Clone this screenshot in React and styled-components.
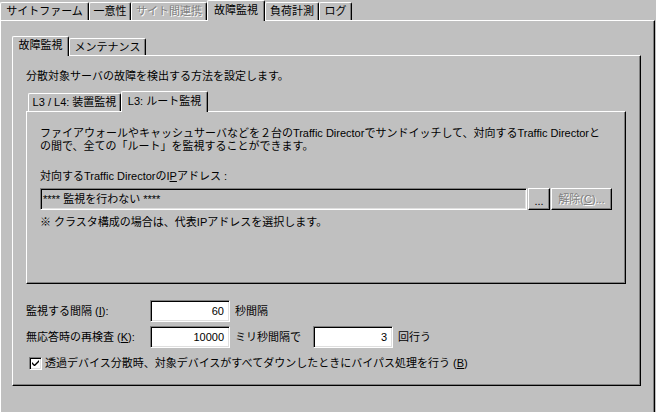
import React from 'react';
import styled, { createGlobalStyle } from 'styled-components';

const Global = createGlobalStyle`
  html, body { margin: 0; padding: 0; background: #c0c0c0; }
  body {
    font-family: "Liberation Sans", "Noto Sans CJK JP", sans-serif;
    font-size: 11px;
    color: #000;
  }
  #root { width: 656px; height: 412px; overflow: hidden; }
`;

const Screen = styled.div`
  width: 656px;
  height: 412px;
  overflow: hidden;
  background: #c0c0c0;
`;

const TabRow = styled.div`
  display: flex;
  align-items: flex-end;
  height: ${p => p.$h}px;
  padding-left: ${p => p.$pad}px;
  position: relative;
  z-index: 2;
`;

const Tab = styled.div`
  box-sizing: border-box;
  width: ${p => p.$w}px;
  height: ${p => (p.$active ? p.$h + 1 : p.$h - 2)}px;
  margin-bottom: ${p => (p.$active ? -1 : 0)}px;
  padding-bottom: ${p => (p.$active ? 2 : 0)}px;
  background: #c0c0c0;
  border-top: 1px solid #fff;
  border-left: 1px solid #fff;
  border-right: 1px solid #000;
  border-radius: 2px 2px 0 0;
  box-shadow: inset -1px 0 #808080;
  display: flex;
  align-items: center;
  justify-content: center;
  white-space: nowrap;
  line-height: 13px;
  position: relative;
  z-index: ${p => (p.$active ? 3 : 1)};
  color: ${p => (p.$disabled ? '#808080' : '#000')};
  text-shadow: ${p => (p.$disabled ? '1px 1px 0 #fff' : 'none')};
`;

const Panel = styled.div`
  box-sizing: border-box;
  width: ${p => p.$w}px;
  height: ${p => p.$h}px;
  background: #c0c0c0;
  border-top: 1px solid #fff;
  border-left: 1px solid #fff;
  border-right: 1px solid #000;
  border-bottom: ${p => (p.$open ? 'none' : '1px solid #000')};
  box-shadow: ${p => (p.$open ? 'inset -1px 0 #808080' : 'inset -1px -1px #808080')};
  padding: ${p => p.$pad};
  display: flex;
  flex-direction: column;
  flex-shrink: 0;
`;

const Section = styled.div`
  display: flex;
  flex-direction: column;
  margin-top: ${p => p.$mt || 0}px;
`;

const Text = styled.div`
  line-height: 13px;
  white-space: nowrap;
  margin-top: ${p => p.$mt || 0}px;
`;

const Row = styled.div`
  display: flex;
  align-items: center;
  margin-top: ${p => p.$mt || 0}px;
  margin-left: ${p => p.$ml || 0}px;
`;

const Field = styled.div`
  box-sizing: border-box;
  width: ${p => p.$w}px;
  height: 22px;
  background: ${p => (p.$disabled ? '#c0c0c0' : '#fff')};
  border-top: 1px solid #808080;
  border-left: 1px solid #808080;
  border-right: 1px solid #fff;
  border-bottom: 1px solid #fff;
  box-shadow: inset 1px 1px #000, inset -1px -1px #dfdfdf;
  display: flex;
  align-items: center;
  justify-content: ${p => (p.$right ? 'flex-end' : 'flex-start')};
  padding: ${p => (p.$right ? '0 5px 0 0' : '0 0 0 2px')};
  white-space: nowrap;
  line-height: 13px;
  flex-shrink: 0;
`;

const Button = styled.div`
  box-sizing: border-box;
  width: ${p => p.$w}px;
  height: 22px;
  margin-left: ${p => p.$ml || 0}px;
  padding-top: ${p => (p.$low ? 4 : 0)}px;
  background: #c0c0c0;
  border-top: 1px solid #fff;
  border-left: 1px solid #fff;
  border-right: 1px solid #000;
  border-bottom: 1px solid #000;
  box-shadow: inset -1px -1px #808080;
  display: flex;
  align-items: center;
  justify-content: center;
  white-space: nowrap;
  line-height: 13px;
  color: ${p => (p.$disabled ? '#808080' : '#000')};
  text-shadow: ${p => (p.$disabled ? '1px 1px 0 #fff' : 'none')};
  flex-shrink: 0;
`;

const Label = styled.div`
  width: ${p => (p.$w ? `${p.$w}px` : 'auto')};
  margin-left: ${p => p.$ml || 0}px;
  line-height: 13px;
  white-space: nowrap;
  flex-shrink: 0;
`;

const CheckBox = styled.div`
  box-sizing: border-box;
  width: 13px;
  height: 13px;
  background: #fff;
  border-top: 1px solid #808080;
  border-left: 1px solid #808080;
  border-right: 1px solid #fff;
  border-bottom: 1px solid #fff;
  box-shadow: inset 1px 1px #000, inset -1px -1px #dfdfdf;
  display: flex;
  align-items: center;
  justify-content: center;
  flex-shrink: 0;
`;

export default function App() {
  return (
    <>
      <Global />
      <Screen>
        <TabRow $h={20} $pad={0}>
          <Tab $h={20} $w={89}>サイトファーム</Tab>
          <Tab $h={20} $w={42}>一意性</Tab>
          <Tab $h={20} $w={76} $disabled>サイト間連携</Tab>
          <Tab $h={20} $w={58} $active>故障監視</Tab>
          <Tab $h={20} $w={54}>負荷計測</Tab>
          <Tab $h={20} $w={33}>ログ</Tab>
        </TabRow>
        <Panel $w={655} $h={392} $pad="15px 0 0 11px" $open>
          <TabRow $h={19} $pad={0}>
            <Tab $h={19} $w={57} $active>故障監視</Tab>
            <Tab $h={19} $w={77}>メンテナンス</Tab>
          </TabRow>
          <Panel $w={629} $h={331} $pad="14px 0 0 13px">
            <Text>分散対象サーバの故障を検出する方法を設定します。</Text>
            <Section $mt={8}>
              <TabRow $h={20} $pad={2}>
                <Tab $h={20} $w={93}>L3 / L4: 装置監視</Tab>
                <Tab $h={20} $w={87} $active>L3: ルート監視</Tab>
              </TabRow>
              <Panel $w={600} $h={173} $pad="15px 0 0 13px">
                <Text>ファイアウォールやキャッシュサーバなどを２台のTraffic Directorでサンドイッチして、対向するTraffic Directorと</Text>
                <Text>の間で、全ての「ルート」を監視することができます。</Text>
                <Text $mt={17}>対向するTraffic DirectorのI<u>P</u>アドレス :</Text>
                <Row $mt={5}>
                  <Field $w={487} $disabled>**** 監視を行わない ****</Field>
                  <Button $w={22} $ml={1} $low>...</Button>
                  <Button $w={61} $ml={1} $disabled>解除(<u>C</u>)...</Button>
                </Row>
                <Text $mt={6}>※ クラスタ構成の場合は、代表IPアドレスを選択します。</Text>
              </Panel>
            </Section>
            <Row $mt={16}>
              <Label $w={124}>監視する間隔 (<u>I</u>):</Label>
              <Field $w={80} $right>60</Field>
              <Label $ml={5}>秒間隔</Label>
            </Row>
            <Row $mt={4}>
              <Label $w={124}>無応答時の再検査 (<u>K</u>):</Label>
              <Field $w={80} $right>10000</Field>
              <Label $ml={5} $w={78}>ミリ秒間隔で</Label>
              <Field $w={80} $right>3</Field>
              <Label $ml={5}>回行う</Label>
            </Row>
            <Row $mt={9} $ml={3}>
              <CheckBox>
                <svg width="7" height="7" viewBox="0 0 7 7">
                  <path d="M0 2 L0 4 L2 6 L3 6 L7 2 L7 0 L2.5 4.5 Z" fill="#000" />
                </svg>
              </CheckBox>
              <Label $ml={3}>透過デバイス分散時、対象デバイスがすべてダウンしたときにバイパス処理を行う (<u>B</u>)</Label>
            </Row>
          </Panel>
        </Panel>
      </Screen>
    </>
  );
}
